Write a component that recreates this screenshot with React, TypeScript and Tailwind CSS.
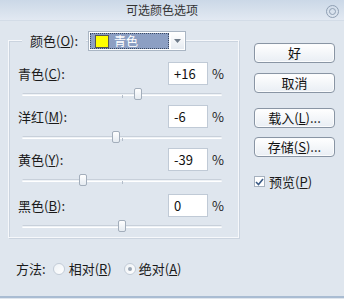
import React from 'react'

const font = "font-['Noto_Sans_CJK_SC',sans-serif]"

const Key = ({ label, k }: { label: string; k: string }) => (
    <span>
        {label}(<span className="underline">{k}</span>)
    </span>
)

const SliderRow = ({ label, k, value, mt }: { label: string; k: string; value: number; mt: string }) => {
    const text = value > 0 ? `+${value}` : `${value}`
    return (
        <div className={`flex flex-col ${mt}`}>
            <div className="flex items-center h-[23px]">
                <div className="w-[159px] pl-[9px] text-[13px] text-[#1a1a1a]">
                    <Key label={label} k={k} />:
                </div>
                <div className="w-[40px] h-[23px] bg-white border border-[#c0cad6] flex items-center pl-[5px] text-[13px] text-[#111]">
                    {text}
                </div>
                <div className="ml-[4px] text-[13px] text-[#222]">%</div>
            </div>
            <div className="relative h-[20px] ml-[13px] w-[200px]">
                <div className="absolute left-0 right-0 top-[8px] h-[3px] border-t border-[#c8d0da] bg-[#eef2f6] border-b border-b-white rounded-sm" />
                <div className="absolute top-[10px] left-[100px] w-px h-[3px] bg-[#b3bdc9]" />
                <div
                    className="absolute top-[3px] w-[8px] h-[12px] bg-gradient-to-b from-white to-[#e5ebf1] border border-[#a3aebb] rounded-[2px]"
                    style={{ left: 100 + value - 4 }}
                />
            </div>
        </div>
    )
}

const Btn = ({ children, mt }: { children: React.ReactNode; mt: string }) => (
    <div className={`${mt} w-[81px] h-[20px] rounded-[4px] border border-[#8995a4] bg-gradient-to-b from-white to-[#e9eef4] flex items-center justify-center text-[13px] text-[#111] shadow-[inset_0_0_0_1px_#fbfcfd]`}>
        {children}
    </div>
)

const Radio = ({ checked }: { checked: boolean }) => (
    <div className="w-[12px] h-[12px] rounded-full border border-[#c3ccd7] bg-gradient-to-br from-[#eef2f6] to-white flex items-center justify-center">
        {checked && <div className="w-[4px] h-[4px] rounded-full bg-[#9aa6b4]" />}
    </div>
)

export default function App() {
    return (
        <div className={`w-[344px] h-[299px] bg-[#dfe6ee] flex flex-col overflow-hidden ${font}`}>
            <div className="h-[21px] bg-gradient-to-b from-[#cbd8e7] to-[#e2e9f2] flex items-center relative border-b border-[#d3dce7]">
                <div className="flex-1 text-center text-[12px] text-[#333] pr-[20px]">可选颜色选项</div>
                <div className="absolute right-[5px] top-[5px] w-[13px] h-[13px] rounded-full border border-[#8f9fb3] flex items-center justify-center">
                    <div className="w-[7px] h-[7px] rounded-full border border-[#8f9fb3]" />
                </div>
            </div>
            <div className="flex flex-1">
                <div className="w-[246px] pl-[8px]">
                    <div className="mt-[19px] w-[231px] h-[198px] border border-[#f6f8fb] shadow-[inset_1px_1px_0_#cbd4df,1px_1px_0_#cbd4df] flex flex-col">
                        <div className="-mt-[10px] ml-[13px] flex items-center h-[21px]">
                            <div className="bg-[#dfe6ee] px-[8px] text-[13px] text-[#1a1a1a]">
                                <Key label="颜色" k="O" />:
                            </div>
                            <div className="ml-[2px] w-[98px] h-[20px] bg-white border border-[#a9b5c3] flex items-center p-[1px]">
                                <div className="flex-1 h-full bg-[#8c9fc3] border border-dotted border-[#3b4a63] flex items-center pl-[4px] gap-[5px]">
                                    <div className="w-[14px] h-[13px] bg-[#ffff00] border border-[#555]" />
                                    <span className="text-[12px] text-white">青色</span>
                                </div>
                                <div className="w-[13px] h-full ml-[2px] flex items-center justify-center bg-gradient-to-b from-white to-[#e6ebf1]">
                                    <svg width="7" height="4" viewBox="0 0 7 4"><path d="M0 0h7L3.5 4z" fill="#6f7b89" /></svg>
                                </div>
                            </div>
                        </div>
                        <SliderRow label="青色" k="C" value={16} mt="mt-[11px]" />
                        <SliderRow label="洋红" k="M" value={-6} mt="" />
                        <SliderRow label="黄色" k="Y" value={-39} mt="" />
                        <SliderRow label="黑色" k="B" value={0} mt="mt-[3px]" />
                    </div>
                    <div className="mt-[21px] flex items-center text-[13px] text-[#1a1a1a] pl-[8px]">
                        <span>方法:</span>
                        <div className="ml-[7px]"><Radio checked={false} /></div>
                        <span className="ml-[4px]"><Key label="相对" k="R" /></span>
                        <div className="ml-[12px]"><Radio checked={true} /></div>
                        <span className="ml-[3px]"><Key label="绝对" k="A" /></span>
                    </div>
                </div>
                <div className="flex flex-col pl-[8px]">
                    <Btn mt="mt-[22px]">好</Btn>
                    <Btn mt="mt-[10px]">取消</Btn>
                    <Btn mt="mt-[15px]"><span>载入(<span className="underline">L</span>)...</span></Btn>
                    <Btn mt="mt-[9px]"><span>存储(<span className="underline">S</span>)...</span></Btn>
                    <div className="mt-[15px] flex items-center text-[13px] text-[#1a1a1a]">
                        <div className="w-[11px] h-[11px] border border-[#a6b1be] bg-white flex items-center justify-center">
                            <svg width="9" height="8" viewBox="0 0 9 8"><path d="M1 4l2.5 2.5L8 1" stroke="#3b5b85" strokeWidth="1.6" fill="none" /></svg>
                        </div>
                        <span className="ml-[4px]">预览(<span className="underline">P</span>)</span>
                    </div>
                </div>
            </div>
            <div className="h-[2px] bg-[#a9bcd2] mb-[1px]" />
        </div>
    )
}
